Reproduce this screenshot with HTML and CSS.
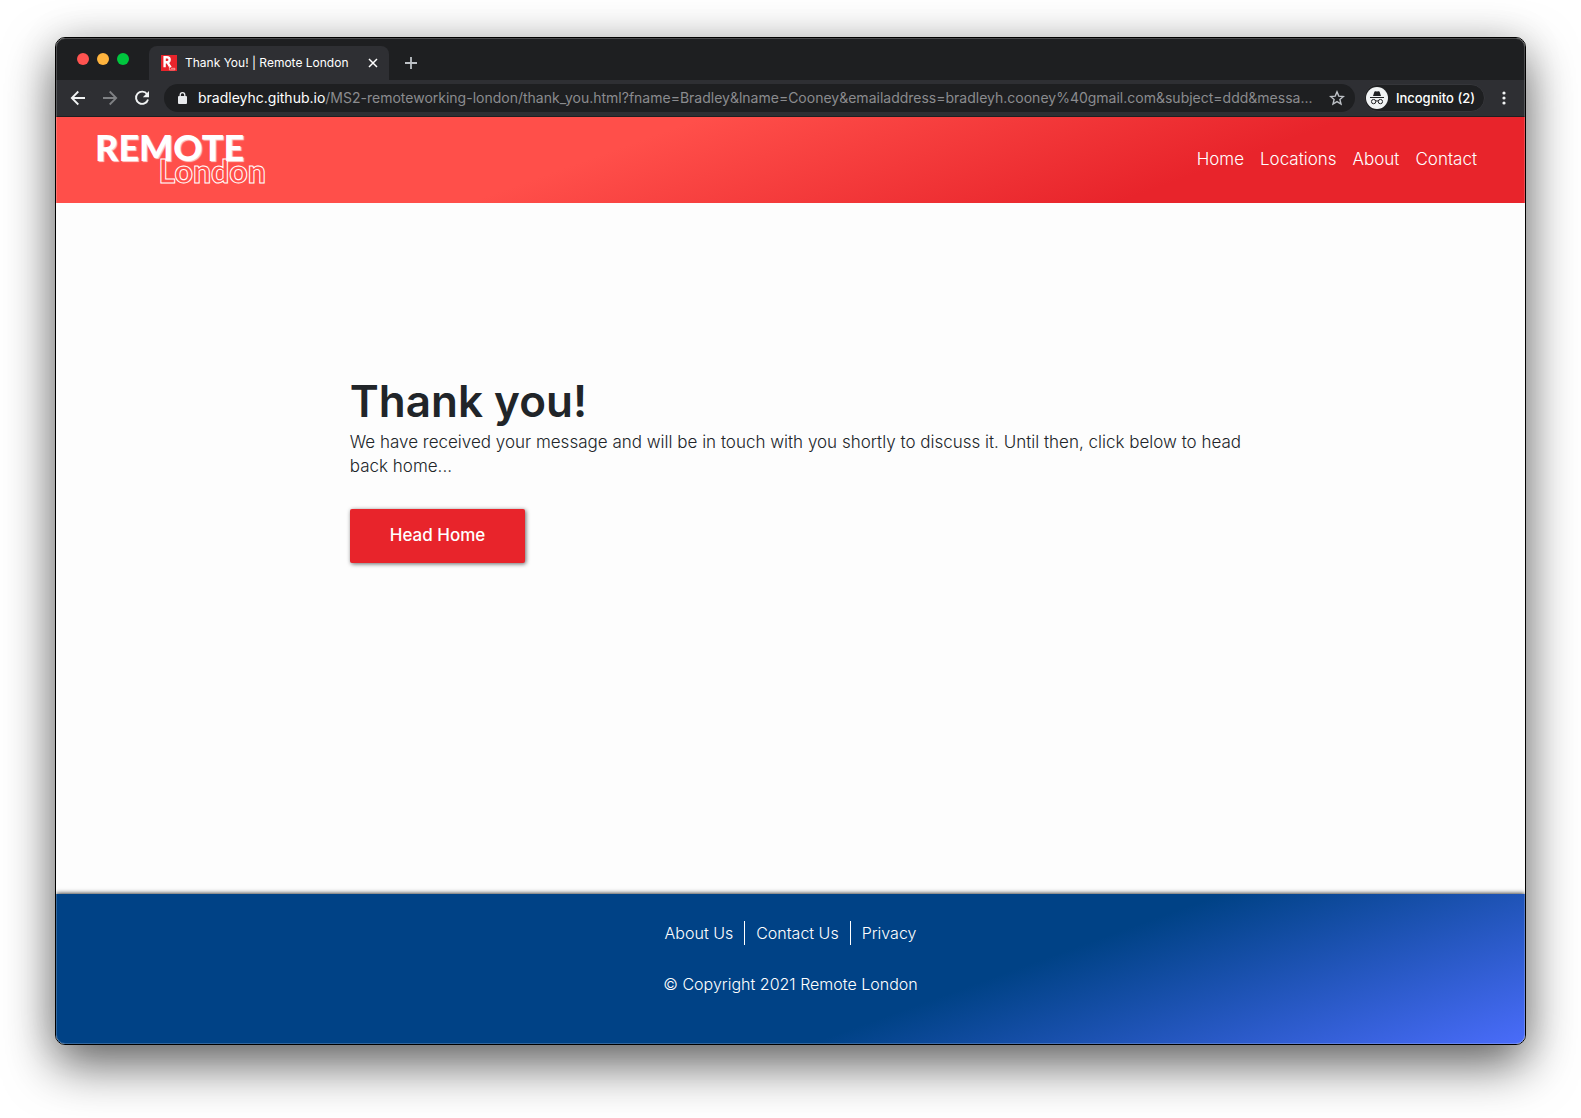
FILE: index.html
```html
<!DOCTYPE html>
<html lang="en">
<head>
<meta charset="utf-8">
<meta name="viewport" content="width=device-width, initial-scale=1">
<title>Thank You! | Remote London</title>
<link rel="stylesheet" href="styles.css">
</head>
<body>
<div class="window">
  <div class="tabstrip">
    <div class="lights">
      <button class="light light-close" aria-label="Close window"></button>
      <button class="light light-min" aria-label="Minimise window"></button>
      <button class="light light-max" aria-label="Zoom window"></button>
    </div>
    <div class="tab">
      <svg class="favicon" width="16" height="16" viewBox="0 0 16 16" aria-hidden="true">
        <path fill="#e8242b" d="M0 0h16v16H0z"/>
        <path fill="none" stroke="#fff" stroke-width="2.4" d="M3.6 12.3V2.300h2.200c3.800 0 3.800 5 0 5H4M6.400 7.400l3.200 4.900"/>
        <path fill="none" stroke="#ffc9c9" stroke-width=".7" d="M8.400 11v3.900h5.400v-1.600H10"/>
      </svg>
      <span class="tab-title">Thank You! | Remote London</span>
      <button class="tab-close" aria-label="Close tab">
        <svg width="10" height="10" viewBox="0 0 10 10"><path fill="none" stroke="currentColor" stroke-width="1.5" d="M1 1l8 8M9 1L1 9"/></svg>
      </button>
    </div>
    <button class="new-tab" aria-label="New tab">
      <svg width="12" height="12" viewBox="0 0 12 12"><path fill="none" stroke="currentColor" stroke-width="1.8" d="M6 0v12M0 6h12"/></svg>
    </button>
  </div>

  <div class="toolbar">
    <button class="tool" aria-label="Back">
      <svg width="16" height="16" viewBox="0 0 16 16"><path fill="none" stroke="currentColor" stroke-width="1.8" d="M15 8H2M8.3 1.5L1.8 8l6.5 6.5"/></svg>
    </button>
    <button class="tool tool-off" aria-label="Forward" disabled>
      <svg width="16" height="16" viewBox="0 0 16 16"><path fill="none" stroke="currentColor" stroke-width="1.8" d="M1 8h13M7.7 1.5L14.2 8l-6.5 6.5"/></svg>
    </button>
    <button class="tool" aria-label="Reload">
      <svg width="16" height="16" viewBox="0 0 16 16"><path fill="none" stroke="currentColor" stroke-width="1.9" d="M13.1 4.2A6.1 6.1 0 1 0 14 9.4"/><path fill="currentColor" d="M15 1v6.2H8.8z"/></svg>
    </button>
    <div class="address">
      <svg class="lock" width="10" height="12" viewBox="0 0 10 12" aria-hidden="true"><rect y="4" width="9" height="8" rx="1" fill="currentColor"/><path fill="none" stroke="currentColor" stroke-width="1.3" d="M2.2 5V3a2.3 2.3 0 0 1 4.6 0v2"/></svg>
      <span class="url"><span class="host">bradleyhc.github.io</span>/MS2-remoteworking-london/thank_you.html?fname=Bradley&amp;lname=Cooney&amp;emailaddress=bradleyh.cooney%40gmail.com&amp;subject=ddd&amp;messa...</span>
      <button class="star" aria-label="Bookmark this page">
        <svg width="16" height="16" viewBox="0 0 16 16"><path fill="none" stroke="currentColor" stroke-width="1.4" d="M8 1.9l1.8 4.2 4.6.4-3.5 3 1.1 4.5L8 11.6 4 14l1.1-4.5-3.5-3 4.6-.4z"/></svg>
      </button>
    </div>
    <div class="incognito">
      <svg width="22" height="22" viewBox="0 0 22 22" aria-hidden="true">
        <circle cx="11" cy="11" r="11" fill="#f1f3f4"/>
        <path fill="#202124" d="M7 9l1.3-4q.3-.9 1.2-.7l1.5.3 1.5-.3q.9-.2 1.2.7L15 9zM4 10h14v1H4z"/>
        <g fill="none" stroke="#202124"><rect x="5.5" y="12.5" width="4.2" height="4.2" rx="1.9"/><rect x="12.3" y="12.5" width="4.2" height="4.2" rx="1.9"/><path d="M9.7 14.2q1.3-.8 2.6 0"/></g>
      </svg>
      <span>Incognito (2)</span>
    </div>
    <button class="more" aria-label="Browser menu">
      <svg width="4" height="14" viewBox="0 0 4 14"><g fill="currentColor"><circle cx="2" cy="2" r="1.6"/><circle cx="2" cy="7" r="1.6"/><circle cx="2" cy="12" r="1.6"/></g></svg>
    </button>
  </div>

  <header class="header">
    <a class="logo" href="#"><span class="logo-top">REMOTE</span><span class="logo-bottom">London</span></a>
    <nav class="nav" aria-label="Main">
      <a href="#">Home</a>
      <a href="#">Locations</a>
      <a href="#">About</a>
      <a href="#">Contact</a>
    </nav>
  </header>

  <main class="main">
    <section class="message">
      <h1>Thank you!</h1>
      <p>We have received your message and will be in touch with you shortly to discuss it. Until then, click below to head back home...</p>
      <a class="button" href="#">Head Home</a>
    </section>
  </main>

  <footer class="footer">
    <nav class="footer-nav" aria-label="Footer">
      <a href="#">About Us</a>
      <a href="#">Contact Us</a>
      <a href="#">Privacy</a>
    </nav>
    <p>© Copyright 2021 Remote London</p>
  </footer>
</div>
</body>
</html>
```
FILE: styles.css
```css
* {
  box-sizing: border-box;
}

body {
  margin: 0;
  min-height: 100vh;
  padding: 37px 55px 73px;
  display: flex;
  background: #fff;
  color: #212529;
  font: 300 17px/24px Inter, sans-serif;
}

a {
  color: inherit;
  text-decoration: none;
}

button {
  display: grid;
  place-items: center;
  margin: 0;
  padding: 0;
  border: 0;
  background: none;
  color: inherit;
  font: inherit;
}

svg {
  display: block;
  flex: none;
}

.window {
  position: relative;
  flex: 1;
  min-width: 0;
  display: flex;
  flex-direction: column;
  border: 1px solid #000;
  border-radius: 10px;
  overflow: hidden;
  background: #fdfdfd;
  box-shadow: 0 20px 50px rgba(0, 0, 0, .6), 0 0 40px rgba(0, 0, 0, .1);
}

/* Light rim inside the window edge */
.window::after {
  content: "";
  position: absolute;
  inset: 0;
  border: 1px solid rgba(255, 255, 255, .2);
  border-radius: 9px;
  pointer-events: none;
}

.tabstrip {
  display: flex;
  height: 42px;
  padding-left: 21px;
  background: #1e1f21;
  color: #fff;
  font: 400 12px/16px Inter, sans-serif;
}

.lights {
  display: flex;
  align-items: center;
  gap: 8px;
  width: 72px;
}

.light {
  width: 12px;
  height: 12px;
  border-radius: 50%;
}

.light-close { background: #ff5350; }
.light-min { background: #ffb43e; }
.light-max { background: #00c63e; }

.tab {
  display: flex;
  align-items: center;
  width: 240px;
  height: 34px;
  margin-top: 8px;
  padding: 0 11px 0 12px;
  gap: 8px;
  border-radius: 8px 8px 0 0;
  background: #2e2f33;
}

.tab-title {
  flex: 1;
  white-space: nowrap;
}

.new-tab {
  width: 44px;
  padding-top: 8px;
  color: #bdc1c6;
}

.toolbar {
  display: flex;
  align-items: center;
  height: 37px;
  padding: 0 19px 0 14px;
  background: #2e2f33;
  border-bottom: 1px solid #1e1f21;
  color: #f1f3f4;
}

.tool {
  width: 16px;
  margin-right: 16px;
}

.tool-off {
  color: #7f8184;
}

.address {
  flex: 1;
  min-width: 0;
  display: flex;
  align-items: center;
  height: 28px;
  margin: 0 9px 0 -2px;
  padding: 0 10px 0 14px;
  gap: 10px;
  border-radius: 14px;
  background: #1e1f21;
  color: #8b8c8f;
  font: 400 14px/20px Inter, sans-serif;
}

.lock {
  color: #e8eaed;
}

.url {
  flex: 1;
  min-width: 0;
  overflow: hidden;
  white-space: nowrap;
}

.host {
  color: #fff;
}

.star {
  color: #bdc1c6;
}

.incognito {
  display: flex;
  align-items: center;
  gap: 8px;
  height: 28px;
  padding: 0 9px 0 1px;
  border: 1px solid #35363a;
  border-radius: 14px;
  background: #1e1f21;
  color: #fff;
  font: 500 13px/20px Inter, sans-serif;
}

.more {
  margin-left: 17px;
}

.header {
  display: flex;
  align-items: center;
  justify-content: space-between;
  height: 86px;
  padding: 0 48px 3px 39px;
  background: linear-gradient(160deg, #ff4f4a 38%, #e8242b 76%);
  color: #fff;
}

.logo {
  display: flex;
  flex-direction: column;
  align-items: flex-end;
  width: 171px;
  font: 900 36px/24px Lato, sans-serif;
}

.logo-top {
  align-self: flex-start;
  text-shadow: 1px 1px 1px #ffd0ce;
}

.logo-bottom {
  font-size: 32px;
  color: transparent;
  -webkit-text-stroke: 1px #fff;
}

.nav {
  display: flex;
  gap: 16px;
}

.main {
  flex: 1;
  padding: 173px 16px 96px 20%;
}

.message {
  width: 78%;
}

.message h1 {
  margin: 0 0 4px;
  font-size: 44px;
  font-weight: 600;
  line-height: 50px;
}

.message p {
  margin: 0 0 31px;
}

.button {
  display: inline-block;
  padding: 14px 40px 16px;
  border-radius: 2px;
  background: #e8242b;
  color: #fff;
  font-weight: 500;
  box-shadow: 1px 1px 4px rgba(0, 0, 0, .6);
}

.footer {
  display: flex;
  flex-direction: column;
  align-items: center;
  gap: 27px;
  padding: 27px 16px 48px;
  background: linear-gradient(160deg, #004286 62%, #4a6cfa);
  box-shadow: 0 0 5px #000;
  color: #fff;
  font-size: 16px;
}

.footer p {
  margin: 0;
}

.footer-nav {
  display: flex;
}

.footer-nav a {
  padding: 0 11px;
}

.footer-nav a + a {
  border-left: 1px solid #fff;
}
```
